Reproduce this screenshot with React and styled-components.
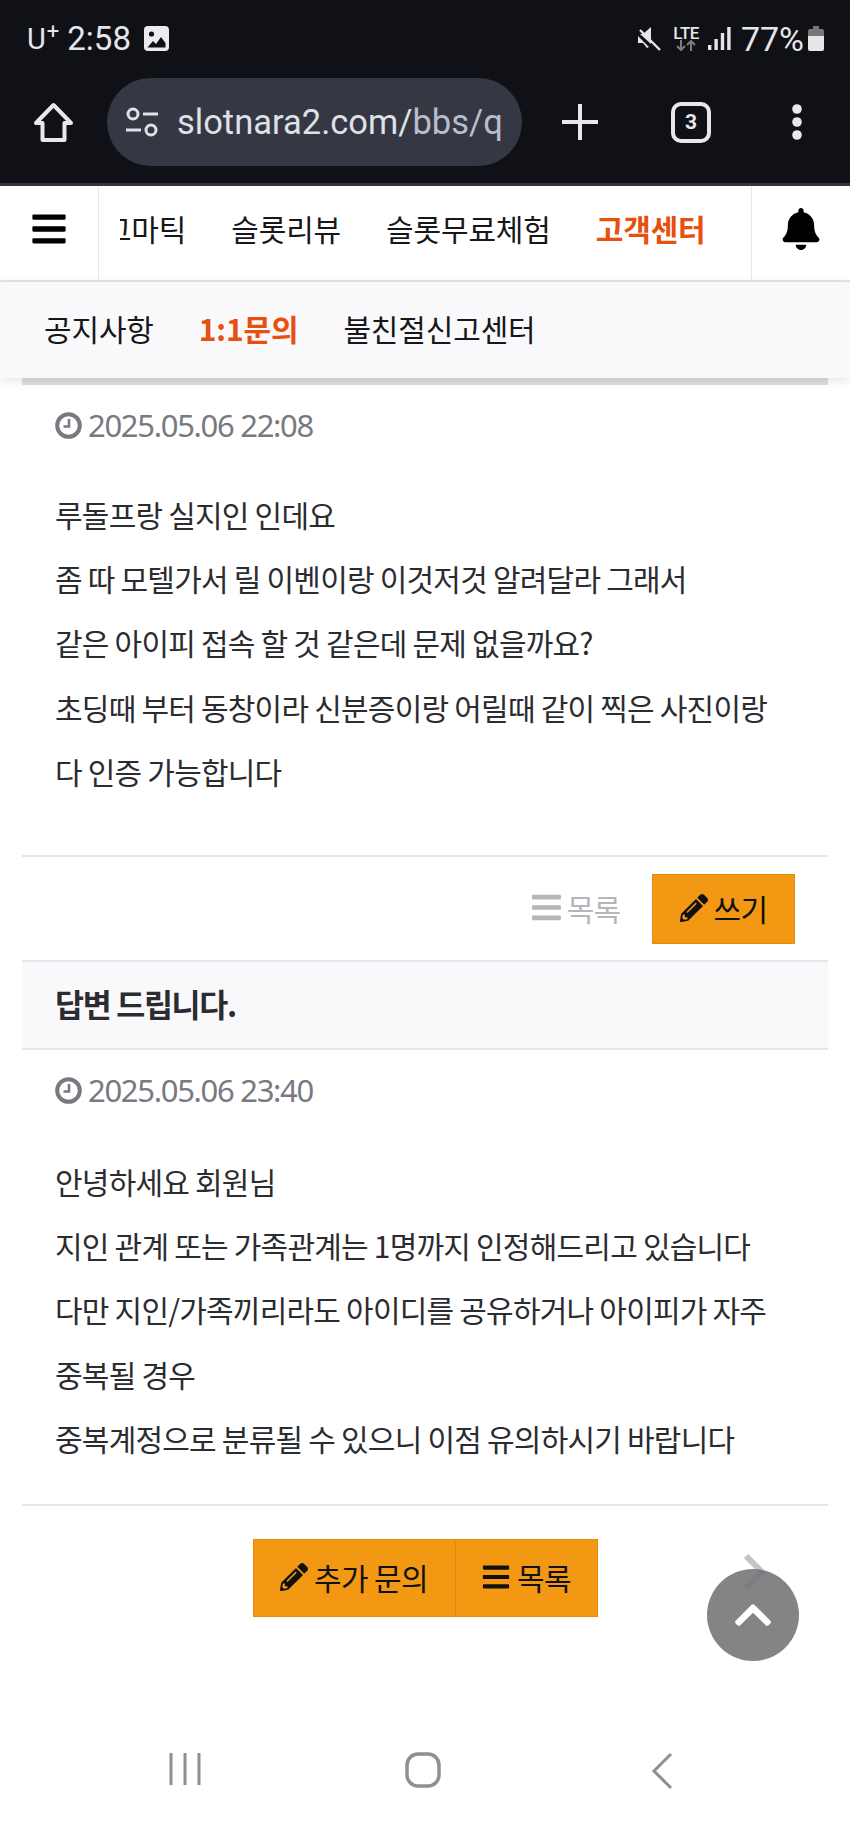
import styled, { createGlobalStyle } from 'styled-components';
import { FaBars, FaBell, FaChevronUp, FaPencilAlt } from 'react-icons/fa';

const kr = `"Noto Sans CJK KR", "Noto Sans", sans-serif`;

const Global = createGlobalStyle`
  html, body { margin: 0; padding: 0; background: #fff; }
  body { font-family: ${kr}; overflow: hidden; }
  * { box-sizing: border-box; }
`;

const Page = styled.div`
  position: relative;
  width: 850px;
  height: 1823px;
  overflow: hidden;
  display: flex;
  flex-direction: column;
`;

const Chrome = styled.div`
  height: 186px;
  background: #101116;
  border-bottom: 3px solid #34363a;
  display: flex;
  flex-direction: column;
`;

const StatusBar = styled.div`
  height: 77px;
  padding: 0 26px 0 27px;
  display: flex;
  align-items: center;
  justify-content: space-between;
  color: #e6e6e8;
  font-family: Roboto, sans-serif;
  font-size: 32px;
`;

const StatusGroup = styled.div`
  display: flex;
  align-items: center;
  gap: ${(p) => p.$gap || 8}px;
`;

const Carrier = styled.span`
  font-size: 29px;
  sup { font-size: 22px; line-height: 0; vertical-align: 10px; margin-left: 1px; }
`;

const Clock = styled.span`
  font-size: 33px;
`;

const Percent = styled.span`
  font-size: 34px;
  margin-left: 1px;
`;

const Lte = styled.span`
  display: flex;
  flex-direction: column;
  align-items: center;
  margin-left: 2px;
  font-size: 17px;
  line-height: 14px;
  font-weight: 500;
  letter-spacing: -0.5px;
`;

const Toolbar = styled.div`
  flex: 1;
  display: flex;
  align-items: center;
  padding: 0 0 16px 33px;
  color: #e8e8ec;
`;

const UrlPill = styled.div`
  width: 415px;
  height: 88px;
  margin-left: 33px;
  border-radius: 44px;
  background: #353843;
  display: flex;
  align-items: center;
  padding-left: 18px;
  gap: 18px;
  overflow: hidden;
`;

const UrlText = styled.span`
  font-family: Roboto, sans-serif;
  font-size: 34.5px;
  color: #dfe1e8;
  white-space: nowrap;
  span { color: #b9bdcc; }
`;

const ToolButton = styled.div`
  display: flex;
  align-items: center;
  justify-content: center;
  margin-left: ${(p) => p.$left}px;
`;

const TabCount = styled.div`
  width: 40px;
  height: 41px;
  border: 4px solid #e8e8ec;
  border-radius: 10px;
  font-family: Roboto, sans-serif;
  font-weight: 700;
  font-size: 21px;
  display: flex;
  align-items: center;
  justify-content: center;
`;

const MainNav = styled.nav`
  height: 96px;
  display: flex;
  background: #fff;
  border-bottom: 2px solid #e4e4e8;
`;

const NavSide = styled.div`
  width: ${(p) => p.$w}px;
  flex: none;
  display: flex;
  align-items: center;
  justify-content: center;
  padding-bottom: 8px;
  color: #000;
  border-${(p) => p.$side}: 1px solid #e8e8ec;
`;

const NavItems = styled.div`
  flex: 1;
  min-width: 0;
  margin-left: 21px;
  overflow: hidden;
  display: flex;
  align-items: center;
  gap: 45px;
  padding-bottom: 11px;
`;

const NavItem = styled.a`
  flex: none;
  font-size: 30px;
  letter-spacing: -0.15px;
  line-height: 44px;
  color: ${(p) => (p.$active ? '#e8500f' : '#17171a')};
  font-weight: ${(p) => (p.$active ? 700 : 400)};
  margin-left: ${(p) => p.$offset || 0}px;
`;

const SubNav = styled.nav`
  position: relative;
  z-index: 1;
  height: 96px;
  padding: 0 0 4px 44px;
  display: flex;
  align-items: center;
  gap: 45px;
  background: #f9f9fb;
  box-shadow: 0 3px 10px rgba(0, 0, 0, 0.1);
`;

const Content = styled.main`
  flex: 1;
  padding: 0 22px;
  display: flex;
  flex-direction: column;
`;

const TopEdge = styled.div`
  height: 7px;
  background: #dedee1;
`;

const DateRow = styled.div`
  height: 40px;
  margin: ${(p) => p.$top}px 0 0 33px;
  display: flex;
  align-items: center;
  gap: 6px;
  color: #777a80;
  font-family: "Noto Sans", sans-serif;
  font-size: 31px;
  letter-spacing: -1.3px;
`;

const Message = styled.div`
  margin: ${(p) => p.$top}px 0 0 33px;
  font-size: 30px;
  line-height: 64.2px;
  letter-spacing: -0.78px;
  color: #2b2c30;
`;

const Rule = styled.hr`
  margin: ${(p) => p.$top}px 0 0;
  border: 0;
  height: 2px;
  background: #e6e6ea;
`;

const ListBar = styled.div`
  height: 103px;
  padding: 17px 33px 0 0;
  display: flex;
  justify-content: flex-end;
  align-items: flex-start;
  gap: 32px;
`;

const GhostLink = styled.a`
  height: 70px;
  padding-bottom: 3px;
  display: flex;
  align-items: center;
  gap: 4px;
  color: #b5b5ba;
  font-size: 30px;
  letter-spacing: -1px;
`;

const Button = styled.a`
  height: ${(p) => p.$h || 70}px;
  width: ${(p) => p.$w}px;
  padding-bottom: 3px;
  display: flex;
  align-items: center;
  justify-content: center;
  gap: 6px;
  background: #f39813;
  border: 1px solid #e68a0c;
  color: #111;
  font-size: 30px;
  letter-spacing: -0.6px;
  & + & { margin-left: -1px; }
`;

const AnswerTitle = styled.h2`
  margin: 0;
  height: 90px;
  padding: 0 0 4px 33px;
  display: flex;
  align-items: center;
  background: #f9f9fb;
  border-top: 2px solid #e6e6ea;
  border-bottom: 2px solid #e6e6ea;
  font-size: 31.5px;
  font-weight: 700;
  letter-spacing: -1.3px;
  color: #2b2c30;
`;

const ButtonRow = styled.div`
  margin-top: 33px;
  display: flex;
  justify-content: center;
`;

const NextMark = styled.svg`
  position: absolute;
  left: 742px;
  top: 1553px;
`;

const ScrollTop = styled.div`
  position: absolute;
  left: 707px;
  top: 1569px;
  width: 92px;
  height: 92px;
  border-radius: 50%;
  background: rgba(115, 115, 118, 0.88);
  color: #fff;
  display: flex;
  align-items: center;
  justify-content: center;
`;

const SystemNav = styled.div`
  position: absolute;
  left: 0;
  right: 0;
  bottom: 0;
  height: 106px;
  color: #8f8f93;
`;

const SystemIcon = styled.svg`
  position: absolute;
  left: ${(p) => p.$x}px;
  top: 35px;
`;

const ClockIcon = () => (
  <svg width="27" height="27" viewBox="0 0 27 27" fill="none" stroke="#777a80">
    <circle cx="13.5" cy="13.5" r="11.3" strokeWidth="4" />
    <path d="M14 7v7.5H8.5" strokeWidth="2.6" />
  </svg>
);

const Message1 = ['루돌프랑 실지인 인데요', '좀 따 모텔가서 릴 이벤이랑 이것저것 알려달라 그래서', '같은 아이피 접속 할 것 같은데 문제 없을까요?', '초딩때 부터 동창이라 신분증이랑 어릴때 같이 찍은 사진이랑', '다 인증 가능합니다'];
const Message2 = ['안녕하세요 회원님', '지인 관계 또는 가족관계는 1명까지 인정해드리고 있습니다', '다만 지인/가족끼리라도 아이디를 공유하거나 아이피가 자주', '중복될 경우', '중복계정으로 분류될 수 있으니 이점 유의하시기 바랍니다'];

export default function App() {
  return (
    <Page>
      <Global />
      <Chrome>
        <StatusBar>
          <StatusGroup>
            <Carrier>U<sup>+</sup></Carrier>
            <Clock>2:58</Clock>
            <svg width="25" height="25" viewBox="0 0 25 25" style={{ marginLeft: 5 }}>
              <rect width="25" height="25" rx="4" fill="#ececee" />
              <circle cx="7.5" cy="8" r="2.6" fill="#101116" />
              <path d="M3.5 21.5l5.5-6.5 3 3 5-7 4.5 6v4.5z" fill="#101116" />
            </svg>
          </StatusGroup>
          <StatusGroup $gap={9}>
            <svg width="24" height="24" viewBox="0 0 24 24" fill="#e6e6e8">
              <path d="M0 7h5l8-7v17L2 7z" />
              <path d="M0 9l11 11-2 1-4-5H0z" />
              <path d="M2 3l20 20" stroke="#e6e6e8" strokeWidth="2.4" fill="none" />
            </svg>
            <Lte>
              LTE
              <svg width="20" height="11" viewBox="0 0 20 11" fill="none" stroke="#7d7d80" strokeWidth="2">
                <path d="M5 0v10M1 6l4 4 4-4M15 11V1M11 5l4-4 4 4" />
              </svg>
            </Lte>
            <svg width="23" height="23" viewBox="0 0 23 23" fill="#e6e6e8">
              <rect x="0" y="18" width="3.4" height="5" />
              <rect x="6.4" y="12" width="3.4" height="11" />
              <rect x="12.8" y="6" width="3.4" height="17" />
              <rect x="19.2" y="0" width="3.4" height="23" />
            </svg>
            <Percent>77%</Percent>
            <svg width="16" height="25" viewBox="0 0 16 25" style={{ marginLeft: -5 }}>
              <path d="M5 0h6v3h3a2 2 0 0 1 2 2v5H0V5a2 2 0 0 1 2-2h3z" fill="#77777a" />
              <path d="M0 10h16v13a2 2 0 0 1-2 2H2a2 2 0 0 1-2-2z" fill="#e6e6e8" />
            </svg>
          </StatusGroup>
        </StatusBar>
        <Toolbar>
          <svg width="41" height="41" viewBox="0 0 41 41" fill="none" stroke="currentColor" strokeWidth="4" strokeLinejoin="round">
            <path d="M20.5 3 3 21h6.5v17h22V21H38z" />
          </svg>
          <UrlPill>
            <svg width="34" height="34" viewBox="0 0 34 34" fill="none" stroke="#dfe1e8" strokeWidth="3">
              <circle cx="8" cy="9" r="5" />
              <path d="M18 9h15M1 25h15" />
              <circle cx="26" cy="25" r="5" />
            </svg>
            <UrlText>slotnara2.com/<span>bbs/q</span></UrlText>
          </UrlPill>
          <ToolButton $left={40}>
            <svg width="36" height="36" viewBox="0 0 36 36" stroke="currentColor" strokeWidth="4">
              <path d="M18 0v36M0 18h36" />
            </svg>
          </ToolButton>
          <ToolButton $left={73}>
            <TabCount>3</TabCount>
          </ToolButton>
          <ToolButton $left={80}>
            <svg width="12" height="36" viewBox="0 0 12 36" fill="currentColor">
              <circle cx="6" cy="5" r="4.8" />
              <circle cx="6" cy="18" r="4.8" />
              <circle cx="6" cy="31" r="4.8" />
            </svg>
          </ToolButton>
        </Toolbar>
      </Chrome>

      <MainNav>
        <NavSide $w={99} $side="right"><FaBars size={38} /></NavSide>
        <NavItems>
          <NavItem $offset={-71}>프라그마틱</NavItem>
          <NavItem>슬롯리뷰</NavItem>
          <NavItem>슬롯무료체험</NavItem>
          <NavItem $active>고객센터</NavItem>
        </NavItems>
        <NavSide $w={99} $side="left"><FaBell size={42} /></NavSide>
      </MainNav>
      <SubNav>
        <NavItem>공지사항</NavItem>
        <NavItem $active>1:1문의</NavItem>
        <NavItem>불친절신고센터</NavItem>
      </SubNav>

      <Content>
        <TopEdge />
        <DateRow $top={20}><ClockIcon />2025.05.06 22:08</DateRow>
        <Message $top={37}>
          {Message1.map((line) => <div key={line}>{line}</div>)}
        </Message>
        <Rule $top={52} />
        <ListBar>
          <GhostLink><FaBars size={33} />목록</GhostLink>
          <Button $w={143}><FaPencilAlt size={28} />쓰기</Button>
        </ListBar>
        <AnswerTitle>답변 드립니다.</AnswerTitle>
        <DateRow $top={20}><ClockIcon />2025.05.06 23:40</DateRow>
        <Message $top={39}>
          {Message2.map((line) => <div key={line}>{line}</div>)}
        </Message>
        <Rule $top={34} />
        <ButtonRow>
          <Button $w={203} $h={78}><FaPencilAlt size={28} />추가 문의</Button>
          <Button $w={143} $h={78}><FaBars size={30} />목록</Button>
        </ButtonRow>
      </Content>

      <NextMark width="26" height="38" viewBox="0 0 26 38" fill="none" stroke="#c4c4c8" strokeWidth="6">
        <path d="M4 3l16 16L4 35" />
      </NextMark>
      <ScrollTop><FaChevronUp size={42} /></ScrollTop>

      <SystemNav>
        <SystemIcon $x={168} width="34" height="34" viewBox="0 0 34 34" stroke="currentColor" strokeWidth="3">
          <path d="M3 1v32M17 1v32M31 1v32" />
        </SystemIcon>
        <SystemIcon $x={405} width="36" height="36" viewBox="0 0 36 36" fill="none" stroke="currentColor" strokeWidth="3.5">
          <rect x="2" y="2" width="32" height="32" rx="11" />
        </SystemIcon>
        <SystemIcon $x={650} width="24" height="38" viewBox="0 0 24 38" fill="none" stroke="currentColor" strokeWidth="3">
          <path d="M21 2 4 19l17 17" />
        </SystemIcon>
      </SystemNav>
    </Page>
  );
}
